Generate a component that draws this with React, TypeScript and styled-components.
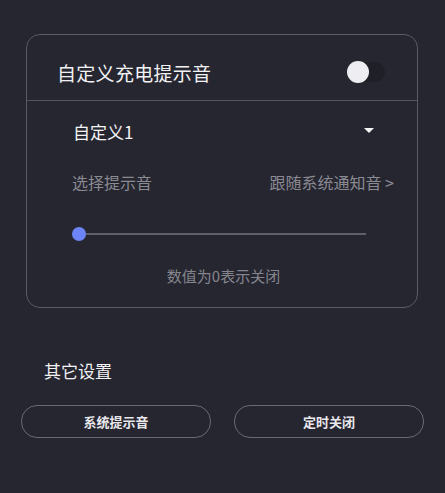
import styled, { createGlobalStyle } from "styled-components";

const GlobalStyle = createGlobalStyle`
  html, body {
    margin: 0;
    padding: 0;
    background: #262630;
  }
  body {
    font-family: "Noto Sans CJK SC", "Noto Sans", sans-serif;
    color: #f2f2f5;
  }
`;

const Page = styled.div`
  width: 445px;
  height: 493px;
  box-sizing: border-box;
  padding-top: 34px;
  display: flex;
  flex-direction: column;
`;

const Card = styled.div`
  margin-left: 26px;
  width: 392px;
  height: 274px;
  box-sizing: border-box;
  border: 1px solid #5b5b66;
  border-radius: 14px;
  display: flex;
  flex-direction: column;
`;

const Header = styled.div`
  height: 66px;
  box-sizing: border-box;
  display: flex;
  align-items: center;
  justify-content: space-between;
  padding: 9px 32px 0 30px;
  border-bottom: 1px solid #55555f;
  font-size: 19px;
  letter-spacing: 0.3px;
`;

const Switch = styled.div`
  width: 38px;
  height: 20px;
  border-radius: 10px;
  background: #1f1f27;
  display: flex;
  align-items: center;

  & > span {
    width: 22px;
    height: 22px;
    border-radius: 50%;
    background: #eeeef2;
  }
`;

const Row = styled.div<{ $h: number; $left: number; $right: number }>`
  height: ${(p) => p.$h}px;
  display: flex;
  align-items: center;
  justify-content: space-between;
  padding: 0 ${(p) => p.$right}px 0 ${(p) => p.$left}px;
`;

const Preset = styled.span`
  font-size: 17px;
  color: #f4f4f6;
  padding-top: 2px;
`;

const Caret = styled.span`
  width: 0;
  height: 0;
  border-left: 5px solid transparent;
  border-right: 5px solid transparent;
  border-top: 5px solid #f4f4f6;
`;

const Muted = styled.span`
  font-size: 16px;
  color: #8a8a93;
`;

const SliderRow = styled.div`
  height: 58px;
  display: flex;
  align-items: center;
  padding-left: 45px;
`;

const Track = styled.div`
  width: 294px;
  height: 2px;
  background: #5f5f69;
  display: flex;
  align-items: center;

  & > span {
    width: 14px;
    height: 14px;
    border-radius: 50%;
    background: #6c84f5;
  }
`;

const Hint = styled.div`
  height: 22px;
  text-align: center;
  font-size: 15px;
  line-height: 22px;
  color: #85858e;
  padding: 2px 0 0 3px;
`;

const SectionTitle = styled.div`
  margin: 50px 0 0 44px;
  height: 26px;
  line-height: 26px;
  font-size: 17px;
  color: #f2f2f5;
`;

const Buttons = styled.div`
  margin: 21px 0 0 21px;
  display: flex;
  gap: 23px;
`;

const Button = styled.div`
  width: 190px;
  height: 33px;
  box-sizing: border-box;
  border: 1px solid #6a6a74;
  border-radius: 16px;
  display: flex;
  align-items: center;
  justify-content: center;
  font-size: 13px;
  font-weight: 700;
  color: #e8e8ec;
`;

export default function App() {
  return (
    <>
      <GlobalStyle />
      <Page>
        <Card>
          <Header>
            <span>自定义充电提示音</span>
            <Switch>
              <span />
            </Switch>
          </Header>
          <Row $h={58} $left={46} $right={43}>
            <Preset>自定义1</Preset>
            <Caret />
          </Row>
          <Row $h={46} $left={45} $right={23}>
            <Muted>选择提示音</Muted>
            <Muted>跟随系统通知音 &gt;</Muted>
          </Row>
          <SliderRow>
            <Track>
              <span />
            </Track>
          </SliderRow>
          <Hint>数值为0表示关闭</Hint>
        </Card>
        <SectionTitle>其它设置</SectionTitle>
        <Buttons>
          <Button>系统提示音</Button>
          <Button>定时关闭</Button>
        </Buttons>
      </Page>
    </>
  );
}
